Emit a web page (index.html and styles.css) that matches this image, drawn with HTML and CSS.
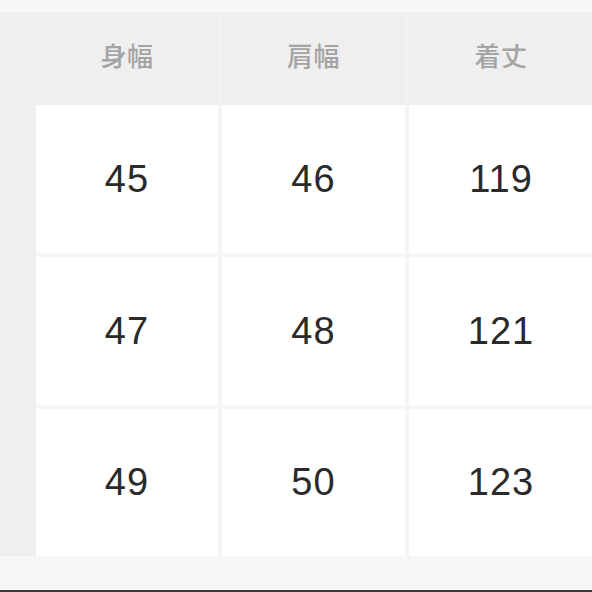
FILE: index.html
```html
<!DOCTYPE html>
<html lang="ja">
<head>
<meta charset="utf-8">
<link rel="stylesheet" href="styles.css">
</head>
<body>
<div class="page">
  <div class="top"></div>
  <div class="table">
    <div class="rail"></div>
    <div class="main">
      <div class="head">
        <div class="hcell">身幅</div>
        <div class="hcell">肩幅</div>
        <div class="hcell">着丈</div>
      </div>
      <div class="body">
        <div class="cell">45</div>
        <div class="cell">46</div>
        <div class="cell">119</div>
        <div class="cell">47</div>
        <div class="cell">48</div>
        <div class="cell">121</div>
        <div class="cell">49</div>
        <div class="cell">50</div>
        <div class="cell">123</div>
      </div>
    </div>
  </div>
  <div class="bottom"></div>
  <div class="edge"></div>
</div>
</body>
</html>
```
FILE: styles.css
```css
html, body {
  margin: 0;
  padding: 0;
}
body {
  width: 592px;
  height: 592px;
  overflow: hidden;
  background: #f6f6f6;
}
.page {
  display: flex;
  flex-direction: column;
  width: 592px;
  height: 592px;
}
.top {
  height: 12px;
  background: #f7f7f7;
  flex: none;
}
.table {
  display: flex;
  flex: none;
  background: #efefef;
}
.rail {
  width: 36px;
  flex: none;
  background: #efefef;
}
.main {
  display: flex;
  flex-direction: column;
  background: #f5f5f5;
}
.head {
  display: grid;
  grid-template-columns: 182px 183px 184px;
  column-gap: 4px;
  height: 93px;
  background: #f2f2f2;
}
.hcell {
  background: #efefef;
  display: flex;
  align-items: center;
  justify-content: center;
  padding-bottom: 8px;
  font-family: "Noto Sans CJK JP", sans-serif;
  font-weight: 500;
  font-size: 26px;
  color: #a4a4a4;
  letter-spacing: 0.5px;
}
.body {
  display: grid;
  grid-template-columns: 182px 183px 184px;
  grid-template-rows: 148px 148px 147px;
  column-gap: 4px;
  row-gap: 4px;
  background: #f5f5f5;
}
.cell {
  background: #ffffff;
  display: flex;
  align-items: center;
  justify-content: center;
  font-family: "Liberation Sans", Arial, sans-serif;
  font-size: 38px;
  color: #2a2a2a;
  letter-spacing: 1px;
}
.bottom {
  flex: 1;
  background: #f6f6f6;
  border-bottom: 1px solid #ffffff;
}
.edge {
  height: 2px;
  flex: none;
  background: #3a3a3a;
}
```
